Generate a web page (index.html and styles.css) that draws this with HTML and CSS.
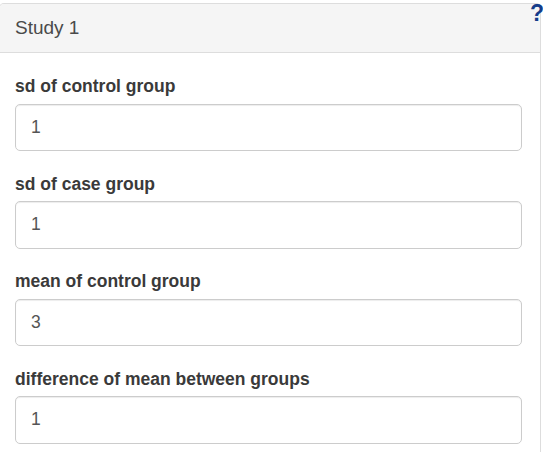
FILE: index.html
```html
<!DOCTYPE html>
<html>
<head>
<meta charset="utf-8">
<link rel="stylesheet" href="styles.css">
</head>
<body>
<div class="page">
  <div class="panel">
    <div class="panel-heading">Study 1</div>
    <div class="panel-body">
      <div class="form-group">
        <label class="control-label">sd of control group</label>
        <input class="form-control" type="text" value="1">
      </div>
      <div class="form-group">
        <label class="control-label">sd of case group</label>
        <input class="form-control" type="text" value="1">
      </div>
      <div class="form-group">
        <label class="control-label">mean of control group</label>
        <input class="form-control" type="text" value="3">
      </div>
      <div class="form-group">
        <label class="control-label">difference of mean between groups</label>
        <input class="form-control" type="text" value="1">
      </div>
    </div>
  </div>
  <span class="help">?</span>
</div>
</body>
</html>
```
FILE: styles.css
```css
html, body {
  margin: 0;
  padding: 0;
  background: #fff;
  font-family: "Liberation Sans", Arial, sans-serif;
  color: #333;
  overflow: hidden;
}
.page {
  position: relative;
  width: 543px;
  height: 452px;
  padding-top: 3px;
  box-sizing: border-box;
}
.panel {
  width: 542px;
  margin-left: -1px;
  border: 1px solid #ddd;
  border-bottom: none;
  border-radius: 5px 5px 0 0;
  height: 460px;
  box-sizing: border-box;
}
.panel-heading {
  background: #f5f5f5;
  border-bottom: 1px solid #ddd;
  border-radius: 4px 4px 0 0;
  height: 49px;
  box-sizing: border-box;
  padding: 0 15px 0 15px;
  display: flex;
  align-items: center;
  font-size: 19px;
  color: #4a4a4a;
}
.panel-body {
  padding: 21px 18px 0 15px;
}
.form-group {
  margin-bottom: 20.5px;
}
.control-label {
  display: block;
  font-weight: bold;
  font-size: 17.5px;
  line-height: 24px;
  margin-bottom: 5.5px;
  color: #3a3a3a;
}
.form-control {
  display: block;
  width: 100%;
  height: 47.5px;
  box-sizing: border-box;
  border: 1px solid #ccc;
  border-radius: 5px;
  box-shadow: inset 0 1px 1px rgba(0,0,0,0.075);
  padding: 0 15px;
  font-family: "Liberation Sans", Arial, sans-serif;
  font-size: 17.5px;
  color: #555;
  background: #fff;
  outline: none;
}
.help {
  position: absolute;
  top: 0;
  left: 530px;
  font-weight: bold;
  font-size: 23px;
  line-height: 26px;
  color: #153d8a;
}
```
